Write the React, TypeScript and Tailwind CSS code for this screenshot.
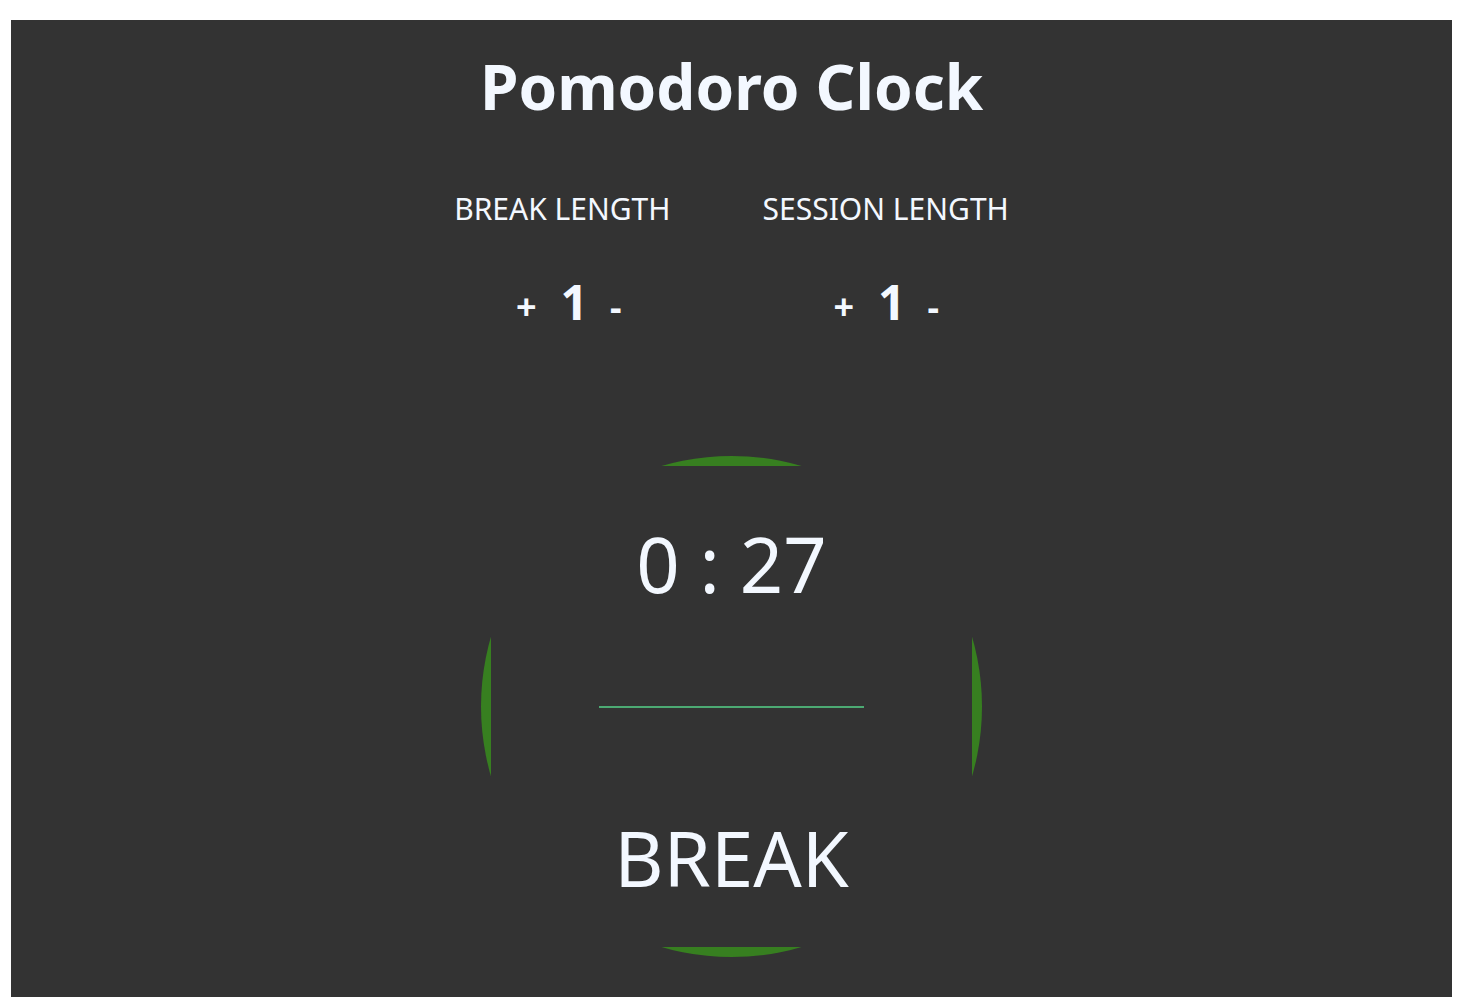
import { useState } from "react";

type LengthProps = { labelId: string; name: string; value: number; onChange: (value: number) => void };

function LengthControl({ labelId, name, value, onChange }: LengthProps) {
  return (
    <div role="group" aria-labelledby={labelId} className="flex items-baseline pr-2 font-bold">
      <button type="button" aria-label={`Increase ${name} length`} className="px-3 text-4xl" onClick={() => onChange(value + 1)}>
        +
      </button>
      <span className="px-3 text-5xl leading-[72px]">{value}</span>
      <button type="button" aria-label={`Decrease ${name} length`} className="pr-3 pl-2.5 text-4xl" onClick={() => onChange(Math.max(1, value - 1))}>
        -
      </button>
    </div>
  );
}

export default function App() {
  const [breakLength, setBreakLength] = useState(1);
  const [sessionLength, setSessionLength] = useState(1);

  return (
    <main className="mt-5 mr-[10px] mb-[9px] ml-[11px] flex flex-col items-center bg-[#333333] pb-10 font-['Noto_Sans',sans-serif] text-[#f3f8ff]">
      <h1 className="mt-[18px] text-[62px] leading-[96px] font-bold">Pomodoro Clock</h1>
      <div className="mt-[51px] flex justify-center gap-[92px] text-[30px] leading-[48px]">
        <h2 id="break-label">BREAK LENGTH</h2>
        <h2 id="session-label">SESSION LENGTH</h2>
      </div>
      <div className="mt-[33px] flex justify-center gap-[180px]">
        <LengthControl labelId="break-label" name="break" value={breakLength} onChange={setBreakLength} />
        <LengthControl labelId="session-label" name="session" value={sessionLength} onChange={setSessionLength} />
      </div>
      <div className="mt-[118px] flex size-[501px] items-center justify-center rounded-full bg-[#377f20]">
        <div className="flex size-[481px] flex-col items-center bg-[#333333]">
          <p className="mt-[38px] text-[76px] leading-[120px]">0 : 27</p>
          <hr className="mt-[82px] w-[265px] border-t-2 border-[#4caa73]" />
          <p className="mt-[90px] text-[76px] leading-[120px]">BREAK</p>
        </div>
      </div>
    </main>
  );
}
